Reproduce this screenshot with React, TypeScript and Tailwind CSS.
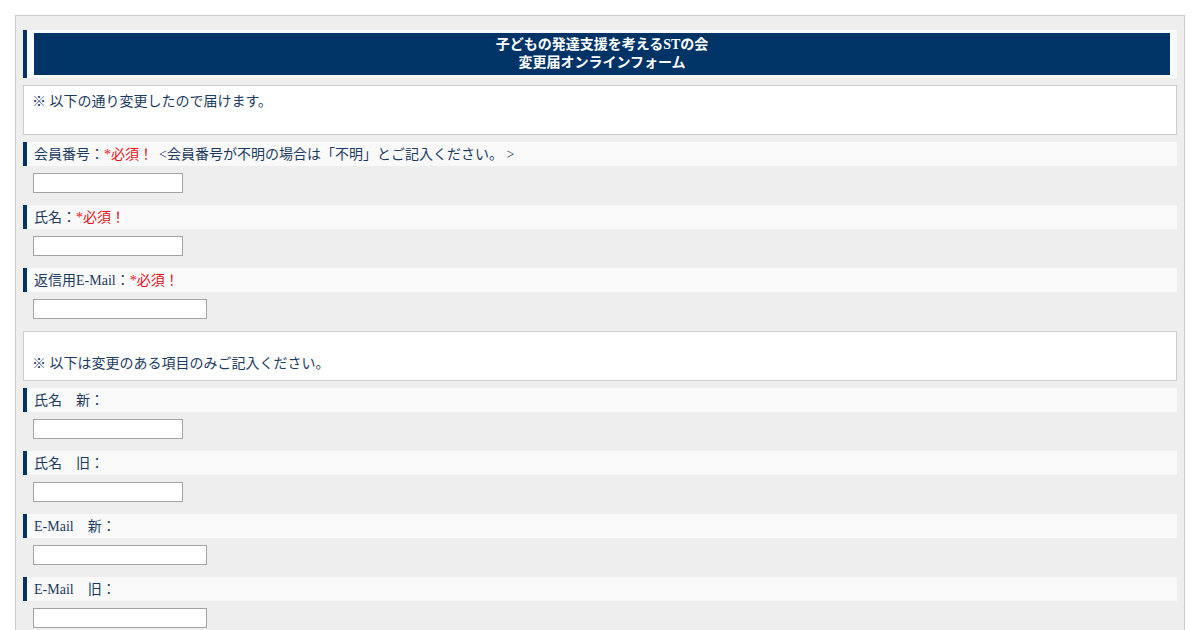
const font = '[font-family:"Liberation_Serif","Noto_Sans_CJK_JP",serif]';

const Label = ({ text, required }: { text: string; required?: boolean }) => (
  <div className="flex h-6 items-stretch">
    <div className="w-1 bg-[#003366]" />
    <div className="flex flex-1 items-center bg-[#f9f9f9] pl-[7px] text-[14px] text-[#1c3a5e]">
      {text}
      {required && <span className="text-[#e8121a]">*必須！</span>}
    </div>
  </div>
);

const Field = ({ wide }: { wide?: boolean }) => (
  <div className="h-8 pl-[10px] pt-[7px]">
    <input
      type="text"
      className={`block h-5 border border-[#a3a3a3] bg-white ${wide ? 'w-[174px]' : 'w-[150px]'}`}
    />
  </div>
);

const Notice = ({ text, blankFirst }: { text: string; blankFirst?: boolean }) => (
  <div className="border border-[#cccccc] bg-white px-2 py-2 text-[14px] leading-4 text-[#1c3a5e]">
    {blankFirst ? (
      <>
        <br />
        {text}
      </>
    ) : (
      <>
        {text}
        <br />
        &nbsp;
      </>
    )}
  </div>
);

const fields = [
  { label: '会員番号：', required: true, extra: '<会員番号が不明の場合は「不明」とご記入ください。 >' },
  { label: '氏名：', required: true },
  { label: '返信用E-Mail：', required: true, wide: true },
];

const changes = [
  { label: '氏名　新：' },
  { label: '氏名　旧：' },
  { label: 'E-Mail　新：', wide: true },
  { label: 'E-Mail　旧：', wide: true },
];

export default function App() {
  return (
    <div className={`min-h-screen bg-white p-[15px] ${font}`}>
      <div className="flex flex-col gap-[7px] border border-[#cccccc] bg-[#eeeeee] px-[7px] pb-4 pt-[14px]">
        <div className="flex h-12 items-stretch">
          <div className="w-1 bg-[#003366]" />
          <div className="flex-1 bg-[#f7f9fb] px-[7px] py-[3px]">
            <div className="flex h-full flex-col items-center justify-center bg-[#003366] text-[14px] font-bold leading-[18px] text-white">
              <span>子どもの発達支援を考えるSTの会</span>
              <span>変更届オンラインフォーム</span>
            </div>
          </div>
        </div>

        <Notice text="※ 以下の通り変更したので届けます。" />

        {fields.map((f) => (
          <div key={f.label} className="flex flex-col">
            <div className="flex h-6 items-stretch">
              <div className="w-1 bg-[#003366]" />
              <div className="flex flex-1 items-center whitespace-pre bg-[#f9f9f9] pl-[7px] text-[14px] text-[#1c3a5e]">
                {f.label}
                <span className="text-[#e8121a]">*必須！</span>
                {f.extra && <span className="ml-[6px]">{f.extra}</span>}
              </div>
            </div>
            <Field wide={f.wide} />
          </div>
        ))}

        <Notice text="※ 以下は変更のある項目のみご記入ください。" blankFirst />

        {changes.map((c) => (
          <div key={c.label} className="flex flex-col">
            <Label text={c.label} />
            <Field wide={c.wide} />
          </div>
        ))}
      </div>
    </div>
  );
}
